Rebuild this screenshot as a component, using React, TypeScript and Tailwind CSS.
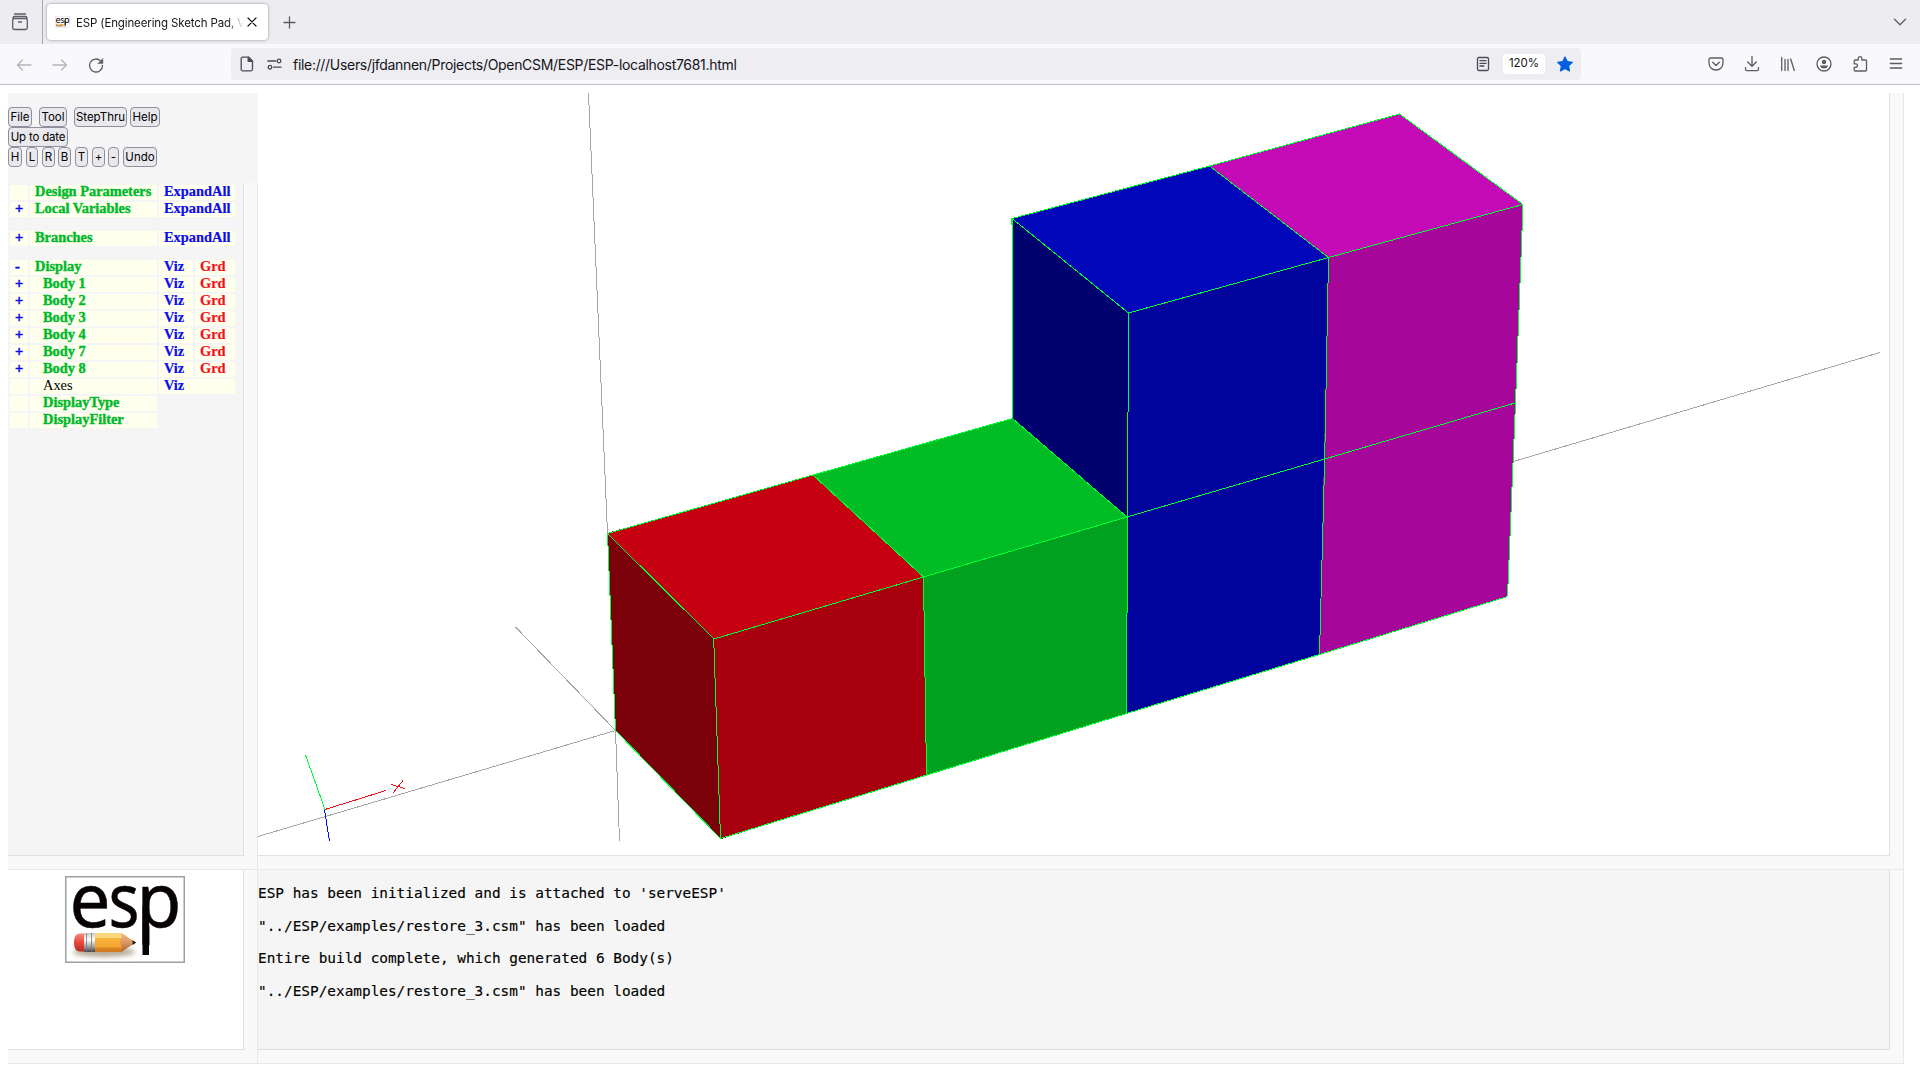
import React from "react";

type IconProps = { className?: string; children: React.ReactNode; w?: number; h?: number };

function Icon({ className = "", children, w = 18, h = 18 }: IconProps) {
  return (
    <svg
      width={w}
      height={h}
      viewBox={`0 0 ${w} ${h}`}
      fill="none"
      stroke="currentColor"
      strokeWidth="1.3"
      strokeLinecap="round"
      strokeLinejoin="round"
      className={`shrink-0 ${className}`}
    >
      {children}
    </svg>
  );
}

function Pencil() {
  return (
    <g>
      <defs>
        <linearGradient id="eraser" x1="0" y1="0" x2="0" y2="1">
          <stop offset="0" stopColor="#f58a7c" />
          <stop offset="0.5" stopColor="#e8483c" />
          <stop offset="1" stopColor="#b32c24" />
        </linearGradient>
        <linearGradient id="ferrule" x1="0" y1="0" x2="0" y2="1">
          <stop offset="0" stopColor="#c9c9c9" />
          <stop offset="0.35" stopColor="#ffffff" />
          <stop offset="0.7" stopColor="#a5a5a5" />
          <stop offset="1" stopColor="#444444" />
        </linearGradient>
        <linearGradient id="barrel" x1="0" y1="0" x2="0" y2="1">
          <stop offset="0" stopColor="#fbd77e" />
          <stop offset="0.25" stopColor="#fcd77c" />
          <stop offset="0.28" stopColor="#f8b43a" />
          <stop offset="0.75" stopColor="#f3a530" />
          <stop offset="0.78" stopColor="#dc8522" />
          <stop offset="1" stopColor="#d07a20" />
        </linearGradient>
        <linearGradient id="wood" x1="0" y1="0" x2="0" y2="1">
          <stop offset="0" stopColor="#e9b587" />
          <stop offset="0.5" stopColor="#dc9a63" />
          <stop offset="1" stopColor="#a85f2c" />
        </linearGradient>
        <filter id="soft" x="-20%" y="-100%" width="140%" height="300%">
          <feGaussianBlur stdDeviation="2.5" />
        </filter>
      </defs>
      <ellipse cx="39" cy="76" rx="31" ry="5" fill="#7c6244" opacity="0.55" filter="url(#soft)" />
      <path d="M15 57.500h5v18h-5c-4 0-6-3-6-9s2-9 6-9z" fill="url(#eraser)" />
      <rect x="19" y="57" width="11" height="19" fill="url(#ferrule)" />
      <path d="M21.500 57v19M26.500 57v19" stroke="#777" strokeWidth="0.8" />
      <path d="M30 57h26l6 3v12l-6 4H30z" fill="url(#barrel)" />
      <path d="M56 57l15 9.500L56 76l1-4-2-5.500 2-6z" fill="url(#wood)" />
      <path d="M67.500 64.300l3.800 2.200-3.800 2.400z" fill="#222" />
    </g>
  );
}

function EspLogo({ width, height }: { width: number; height: number }) {
  return (
    <svg width={width} height={height} viewBox="0 0 120 87" className="block shrink-0">
      <rect x="0.75" y="0.75" width="118.500" height="85.500" fill="#fff" stroke="#9aa1a7" strokeWidth="1.500" />
      <g fill="#070303" stroke="#070303" strokeWidth="0.500" fontFamily='"Noto Sans", sans-serif' fontSize="74">
        <text x="4.500" y="51" textLength="41" lengthAdjust="spacingAndGlyphs">e</text>
        <text x="43.500" y="51" textLength="31" lengthAdjust="spacingAndGlyphs">s</text>
        <text x="71.500" y="51" textLength="45" lengthAdjust="spacingAndGlyphs">p</text>
      </g>
      <rect x="77.500" y="30" width="6.500" height="49" fill="#070303" />
      <Pencil />
    </svg>
  );
}

function TabBar() {
  return (
    <div className="flex h-11 items-center bg-[#ededf1] text-[#5b5b66]">
      <div className="flex h-11 w-[43px] items-center border-r border-[#a9a9b0] pl-[11px]">
        <Icon>
          <path d="M3.500 1h11" />
          <path d="M2 5.200c0-1.200.700-1.700 1.800-1.700h10.400c1.100 0 1.800.500 1.800 1.700" />
          <rect x="1.700" y="5.500" width="14.600" height="11" rx="1.800" />
          <path d="M7.500 9h3" />
        </Icon>
      </div>
      <div className="ml-1 flex h-9 w-[221px] items-center rounded bg-white shadow-[0_0_3px_rgba(0,0,0,0.4)]">
        <div className="ml-2 flex h-[14px] w-[15px] items-center">
          <EspLogo width={15} height={14} />
        </div>
        <div className="ml-1.5 mt-0.5 h-5 w-[168px] overflow-hidden whitespace-nowrap bg-gradient-to-r from-[#15141a] from-[90%] to-transparent bg-clip-text font-['Inter',sans-serif] text-[11.5px] leading-5 tracking-[-0.13px] text-transparent">
          ESP (Engineering Sketch Pad, V1.27)
        </div>
        <Icon className="ml-[3px] text-[#15141a]" w={10} h={10}>
          <path d="M1 1l8 8M9 1l-8 8" strokeWidth="1.200" />
        </Icon>
      </div>
      <Icon className="ml-[15px] mt-px" w={13} h={13}>
        <path d="M6.500 1v11M1 6.500h11" />
      </Icon>
      <Icon className="ml-auto mr-[13px]" w={14} h={8}>
        <path d="M1.500 1.200l5.500 5.500 5.500-5.500" />
      </Icon>
    </div>
  );
}

function NavButton({ children, dim = false }: { children: React.ReactNode; dim?: boolean }) {
  return (
    <div className={`flex w-9 shrink-0 items-center justify-center ${dim ? "text-[#b4b4ba]" : "text-[#5b5b66]"}`}>
      <Icon>{children}</Icon>
    </div>
  );
}

function NavBar() {
  return (
    <div className="flex h-[41px] items-center border-b border-[#bfbfc5] bg-[#f9f9fb]">
      <div className="flex pl-1.5 pt-px">
        <NavButton dim>
          <path d="M16 9H2.500M7.500 4L2.500 9l5 5" />
        </NavButton>
        <NavButton dim>
          <path d="M2 9h13.500M10.500 4l5 5-5 5" />
        </NavButton>
        <NavButton>
          <path d="M15.500 9.500A6.500 6.500 0 1 1 13.600 4.900" />
          <path d="M15.900 2.700v4.800h-4.800z" fill="currentColor" strokeWidth="0.500" />
        </NavButton>
      </div>
      <div className="ml-[117px] flex h-8 w-[1350px] items-center rounded bg-[#ededf2] text-[#4b4b55]">
        <Icon className="ml-[9px]" w={14} h={16}>
          <path d="M2.700 1.200h6l3.800 3.800v8.300c0 .900-.600 1.500-1.500 1.500H2.700c-.900 0-1.500-.600-1.500-1.500V2.700c0-.900.600-1.500 1.500-1.500z" />
          <path d="M8.200 1.200v4.200h4.300z" fill="currentColor" />
        </Icon>
        <Icon className="ml-[13px]" w={15} h={12}>
          <path d="M.800 3h8M6.500 9.200h7.500" />
          <circle cx="12" cy="3" r="1.800" />
          <circle cx="3" cy="9.200" r="1.800" />
        </Icon>
        <div className="ml-[11px] w-[460px] whitespace-nowrap pt-0.5 font-['Inter',sans-serif] text-[14px] leading-8 tracking-[-0.305px] text-[#15141a]">
          file:///Users/jfdannen/Projects/OpenCSM/ESP/ESP-localhost7681.html
        </div>
        <Icon className="ml-auto" w={14} h={16}>
          <rect x="1.500" y="1.500" width="11" height="13" rx="1.500" />
          <path d="M4 4.700h6M4 7.400h6M4 10h4" />
        </Icon>
        <div className="ml-[13px] flex h-5 w-[42px] items-center justify-center rounded-[3px] bg-white font-['Inter',sans-serif] text-[11.500px] text-[#15141a]">
          120%
        </div>
        <svg width="18" height="18" viewBox="0 0 18 18" className="ml-[11px] mr-[7px] shrink-0">
          <path
            d="M9 2l2.200 4.600 5.100.700-3.700 3.500.9 5.100L9 13.500l-4.500 2.400.9-5.100L1.700 7.300l5.100-.700z"
            fill="#0060df"
            stroke="#0060df"
            strokeWidth="1.200"
            strokeLinejoin="round"
          />
        </svg>
      </div>
      <div className="ml-auto mr-1.5 flex">
        <NavButton>
          <path d="M3.700 3h10.600c1 0 1.700.700 1.700 1.700V8c0 4-3 7-7 7s-7-3-7-7V4.700C2 3.700 2.700 3 3.700 3z" />
          <path d="M5.700 7.300L9 10.500l3.300-3.200" />
        </NavButton>
        <NavButton>
          <path d="M9 1.500v9.500M4.700 7L9 11.200 13.300 7M2.500 12.700v1.600c0 .800.500 1.300 1.300 1.300h10.400c.800 0 1.300-.500 1.300-1.300v-1.600" />
        </NavButton>
        <NavButton>
          <path d="M2.700 2.500v13M6 4.500v11M9 4.500v11M11.700 4l3.600 11.500" />
        </NavButton>
        <NavButton>
          <circle cx="9" cy="9" r="7" />
          <circle cx="9" cy="7" r="2.200" fill="currentColor" stroke="none" />
          <path d="M5 10.500h8c-.400 2-2 3-4 3s-3.600-1-4-3z" fill="currentColor" stroke="none" />
        </NavButton>
        <NavButton>
          <path d="M7.200 5V3.400a1.800 1.800 0 0 1 3.600 0V5h3.700c.600 0 1 .400 1 1v9c0 .600-.400 1-1 1H4.200c-.600 0-1-.400-1-1v-2.700h1.500a1.700 1.700 0 0 0 0-3.500H3.200V6c0-.600.400-1 1-1z" />
        </NavButton>
        <NavButton>
          <path d="M3.300 4h11.400M3.300 8.500h11.400M3.300 13h11.400" />
        </NavButton>
      </div>
    </div>
  );
}

function Btn({ children, className }: { children: React.ReactNode; className: string }) {
  return (
    <button
      className={`flex h-5 items-center justify-center whitespace-nowrap rounded-[4px] border border-[#8f8f9d] bg-[#e9e9ed] pt-px font-['Inter',sans-serif] text-[11.500px] leading-none text-black ${className}`}
    >
      {children}
    </button>
  );
}

function ButtonForm() {
  return (
    <div className="h-[90px] w-[250px] bg-[#f5f5f5] pt-3.5">
      <div className="flex">
        <Btn className="w-6">File</Btn>
        <Btn className="ml-[7px] w-7">Tool</Btn>
        <Btn className="ml-[7px] w-[53px]">StepThru</Btn>
        <Btn className="ml-[3px] w-[30px]">Help</Btn>
      </div>
      <div className="flex">
        <Btn className="w-[60px] tracking-[-0.2px]">Up to date</Btn>
      </div>
      <div className="flex">
        <Btn className="w-3.5">H</Btn>
        <Btn className="ml-1 w-3">L</Btn>
        <Btn className="ml-1 w-[13px]">R</Btn>
        <Btn className="ml-[3px] w-[13px]">B</Btn>
        <Btn className="ml-1 w-[13px]">T</Btn>
        <Btn className="ml-1 w-[13px]">+</Btn>
        <Btn className="ml-[3px] w-[11px]">-</Btn>
        <Btn className="ml-1 w-[34px]">Undo</Btn>
      </div>
    </div>
  );
}

type Row = {
  sign?: string;
  name: string;
  indent?: boolean;
  plain?: boolean;
  viz?: boolean;
  grd?: boolean;
  expand?: boolean;
  gap?: boolean;
};

const rows: Row[] = [
  { name: "Design Parameters", expand: true },
  { sign: "+", name: "Local Variables", expand: true },
  { sign: "+", name: "Branches", expand: true, gap: true },
  { sign: "-", name: "Display", viz: true, grd: true, gap: true },
  ...["1", "2", "3", "4", "7", "8"].map((n) => ({ sign: "+", name: `Body ${n}`, indent: true, viz: true, grd: true })),
  { name: "Axes", indent: true, plain: true, viz: true },
  { name: "DisplayType", indent: true },
  { name: "DisplayFilter", indent: true },
];

function Tree() {
  return (
    <div className="h-[687px] w-[250px] border-b border-r border-[#e8e8e8] bg-[#f9f9f9]">
      <div className="flex h-[673px] w-[236px] flex-col gap-0.5 border-b border-r border-[#e0e0e0] bg-[#f5f5f5] pl-0.5 pt-0.5 font-['Liberation_Serif',serif] text-[14.4px] font-bold leading-[13px]">
        {rows.map((r) => (
          <div key={r.name} className={`flex h-[15px] gap-0.5 text-[#0c0cf0] ${r.gap ? "mt-3" : ""}`}>
            <div className="w-[18px] bg-[#ffffee] pl-[5px] [-webkit-text-stroke:0.5px]">{r.sign}</div>
            <div
              className={`w-[127px] whitespace-nowrap bg-[#ffffee] ${r.indent ? "pl-[13px]" : "pl-[5px]"} ${
                r.plain ? "font-normal text-black" : "text-[#00b92b] [-webkit-text-stroke:0.4px]"
              }`}
            >
              {r.name}
            </div>
            {r.expand && <div className="w-[76px] bg-[#ffffee] pl-[5px] [-webkit-text-stroke:0.2px]">ExpandAll</div>}
            {r.viz && (
              <div className={`bg-[#ffffee] pl-[5px] [-webkit-text-stroke:0.2px] ${r.grd ? "w-[34px]" : "w-[76px]"}`}>
                Viz
              </div>
            )}
            {r.grd && <div className="w-10 bg-[#ffffee] pl-[5px] text-[#f80f1c] [-webkit-text-stroke:0.2px]">Grd</div>}
          </div>
        ))}
      </div>
    </div>
  );
}

const faces: [string, string][] = [
  ["607,533 714,639 721,839 615.5,730.5", "#7a000a"],
  ["607,533 813,475 923.5,577 714,639", "#c60212"],
  ["714,639 923.5,577 926.5,775 721,839", "#a9000f"],
  ["813,475 1012,418.5 1127,517 923.5,577", "#00bd26"],
  ["923.5,577 1127,517 1127,713.5 926.5,775", "#00a11e"],
  ["1012,218 1128.5,313 1127.5,517 1012.5,418.5", "#00006e"],
  ["1012,218 1209.5,166 1328.5,257.500 1128.5,313", "#0007b8"],
  ["1128.5,313 1328.5,257.500 1319.5,654.500 1126.5,713.500 1127.5,517", "#00039c"],
  ["1209.5,166 1399.5,114 1523,204.500 1328.5,257.500", "#c40ab6"],
  ["1328.5,257.500 1523,204.500 1507.500,596.500 1319.5,654.500", "#a7069b"],
];

const edges = [
  "607.5,533.5 813,475 1012.5,418.5 1127,517 923.5,577 714,639 607.5,533.5 615.5,730.5 720.5,838.5 1126.5,713.5 1319.5,654.500 1507.5,596.5 1515.5,403 1523,204.500 1399.5,114 1209.5,166 1012,218.500 1012.5,418.5",
  "813,475 923.5,577 926.5,775",
  "713.7,639 720.500,838.500",
  "1012,218.500 1128.500,313 1328.500,257.500 1523,204.500",
  "1209.500,166 1328.500,257.500 1324.700,459 1319.500,654",
  "1128.500,313 1127.500,517 1126.500,713.500",
  "1127,517 1324.700,459 1515,403",
];

function Viewport() {
  return (
    <svg width="1631" height="762" viewBox="258 93 1631 762" className="block" shapeRendering="crispEdges" fill="none">
      <g stroke="#a6a6a6">
        <path d="M588.500 93L607.500 533M615.500 730L619.500 841M515.500 627L615.500 730.500M258 836.500L615.500 730.500M1513.500 461.500L1880 352.500" />
      </g>
      {faces.map(([points, fill]) => (
        <polygon key={points} points={points} fill={fill} />
      ))}
      <g stroke="#00ff32">
        {edges.map((points) => (
          <polyline key={points} points={points} />
        ))}
        <path d="M305.500 755L325 809.500" />
      </g>
      <path d="M325 809.500L386 790.500M391 784.500L405 788.500M403 780.500L393 793" stroke="#fa0f1e" />
      <path d="M324.500 810L329.500 841" stroke="#0010ff" />
    </svg>
  );
}

const messages = [
  "ESP has been initialized and is attached to 'serveESP'",
  '"../ESP/examples/restore_3.csm" has been loaded',
  "Entire build complete, which generated 6 Body(s)",
  '"../ESP/examples/restore_3.csm" has been loaded',
];

export default function App() {
  return (
    <div className="h-[1080px] w-[1920px] overflow-hidden bg-white">
      <TabBar />
      <NavBar />
      <div className="flex pl-2 pt-2">
        <div>
          <ButtonForm />
          <Tree />
        </div>
        <div className="h-[777px] w-[1646px] border-b border-r border-[#e8e8e8] bg-[#f9f9f9]">
          <div className="h-[763px] w-[1632px] border-b border-r border-[#e0e0e0] bg-white">
            <Viewport />
          </div>
        </div>
      </div>
      <div className="flex pl-2">
        <div className="h-[194px] w-[250px] border-b border-r border-[#e8e8e8] bg-[#f9f9f9]">
          <div className="h-[180px] w-[236px] border-b border-r border-[#e0e0e0] bg-white pl-[57px] pt-1.5">
            <EspLogo width={120} height={87} />
          </div>
        </div>
        <div className="h-[194px] w-[1646px] border-b border-r border-[#e8e8e8] bg-[#f9f9f9]">
          <div className="h-[180px] w-[1632px] border-b border-r border-[#e0e0e0] bg-[#f5f5f5] pt-[7px] font-['DejaVu_Sans_Mono',monospace] text-[14.4px] leading-[32.7px] text-black [-webkit-text-stroke:0.15px]">
            {messages.map((m, i) => (
              <div key={i}>{m}</div>
            ))}
          </div>
        </div>
      </div>
    </div>
  );
}
